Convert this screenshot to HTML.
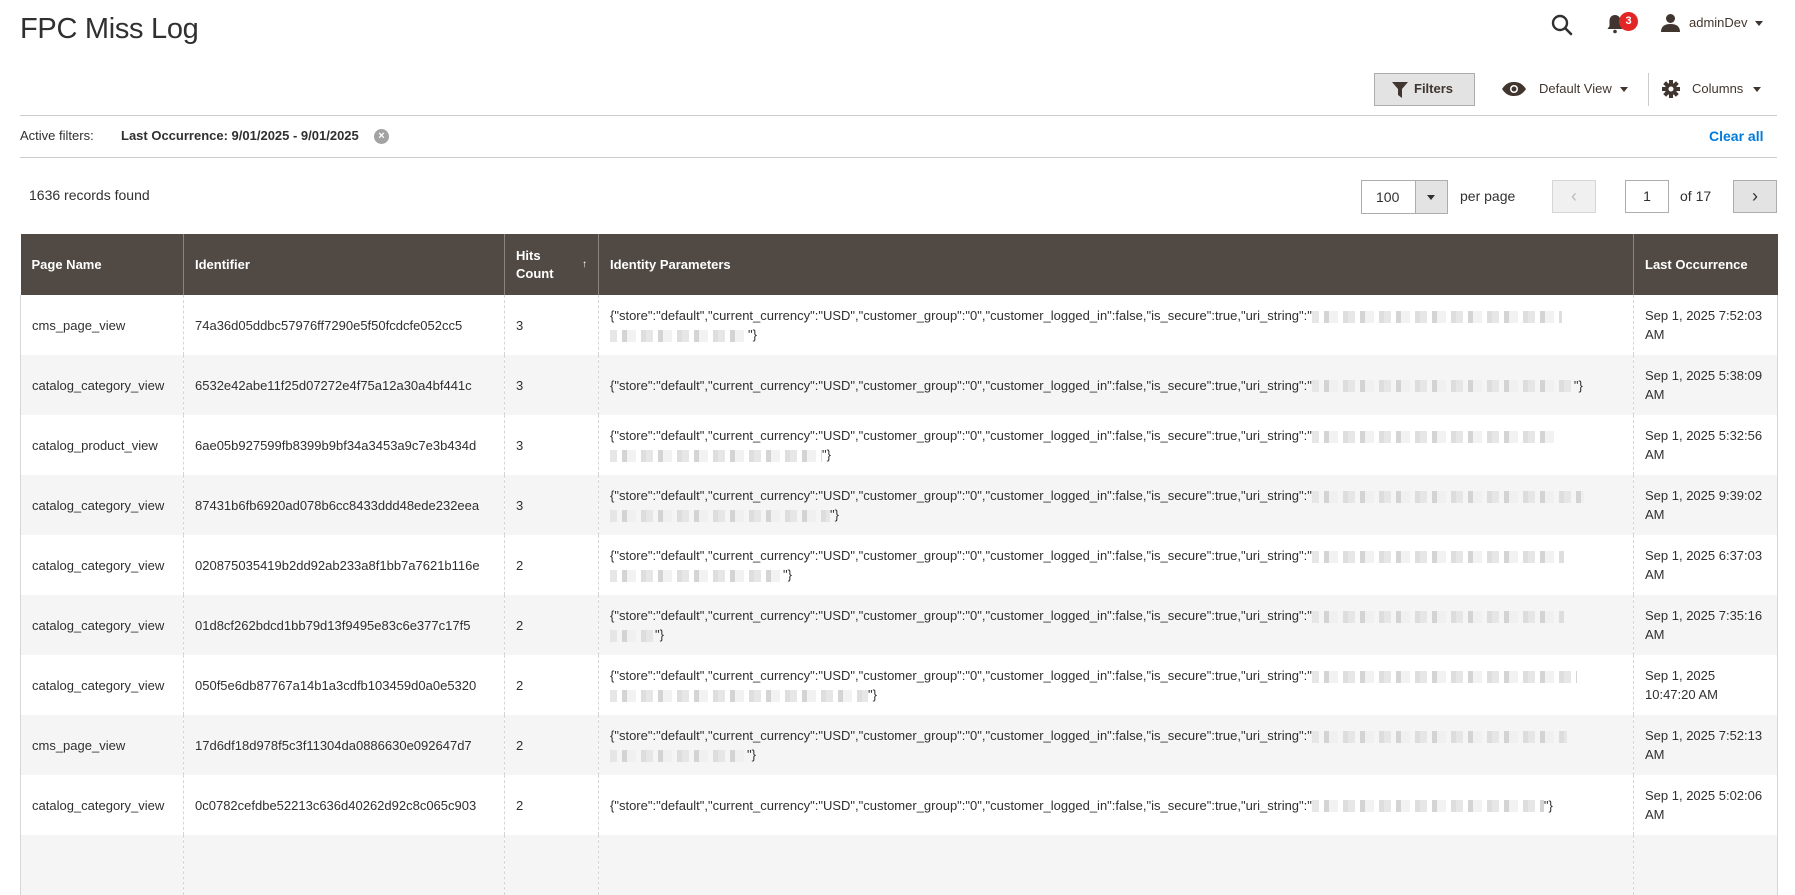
<!DOCTYPE html>
<html><head><meta charset="utf-8">
<style>
*{box-sizing:border-box;margin:0;padding:0}
body{width:1795px;height:844px;overflow:hidden;background:#fff;font-family:"Liberation Sans",sans-serif;color:#303030;position:relative}
.abs{position:absolute}
h1{position:absolute;left:20px;top:13px;font-size:29px;font-weight:normal;color:#303030;letter-spacing:-0.3px}
.hr{position:absolute;left:20px;width:1757px;height:1px;background:#ccc}
.btn{position:absolute;border:1px solid #adadad;background:#e3e3e3}
table{position:absolute;left:20px;top:234px;width:1757px;border-collapse:collapse;table-layout:fixed;font-size:13px}
th{background:#514943;color:#fff;font-weight:bold;text-align:left;padding:0 11px;height:61px;border-left:1px solid #8a837f;font-size:13px;line-height:18px}
th:first-child{border-left:none}
td{height:60px;padding:0 11px;vertical-align:middle;border-left:1px dashed #d6d6d6;line-height:19px;white-space:nowrap;overflow:hidden}
td:first-child{border-left:1px solid #d6d6d6}
td:last-child{border-right:1px solid #d6d6d6;white-space:normal}
tr:nth-child(odd) td{background:#f5f5f5}
.b{display:inline-block;height:12px;vertical-align:middle;background:repeating-linear-gradient(90deg,#e4e4e4 0 7px,transparent 7px 12px,#cfcfcf 12px 17px,#f0f0f0 17px 26px,transparent 26px 31px,#dadada 31px 36px);opacity:.9}
</style></head><body>
<h1>FPC Miss Log</h1>
<svg class="abs" style="left:1551px;top:14px" width="22" height="22" viewBox="0 0 22 22"><circle cx="9" cy="9" r="7" fill="none" stroke="#303030" stroke-width="2.4"/><line x1="14" y1="14" x2="20" y2="20" stroke="#303030" stroke-width="2.6" stroke-linecap="round"/></svg>
<svg class="abs" style="left:1606px;top:14px" width="18" height="20" viewBox="0 0 18 20"><path d="M9 1c-3.5 0-5.5 2.5-5.5 6v5L1.5 15h15l-2-3V7C14.5 3.5 12.5 1 9 1z" fill="#41362f"/><circle cx="9" cy="17.5" r="1.8" fill="#41362f"/></svg>
<div class="abs" style="left:1619px;top:12px;width:19px;height:19px;border-radius:50%;background:#e22626;color:#fff;font-size:11px;font-weight:bold;text-align:center;line-height:19px">3</div>
<svg class="abs" style="left:1661px;top:13px" width="19" height="19" viewBox="0 0 19 19"><circle cx="9.5" cy="5.5" r="4.5" fill="#41362f"/><path d="M0 19c0-6 4-8 9.5-8s9.5 2 9.5 8z" fill="#41362f"/></svg>
<div class="abs" style="left:1689px;top:15px;font-size:13px;color:#41362f">adminDev</div>
<div class="abs" style="left:1755px;top:21px;border:4px solid transparent;border-top:5px solid #41362f"></div>
<div class="btn" style="left:1374px;top:73px;width:101px;height:33px"></div>
<svg class="abs" style="left:1392px;top:82px" width="16" height="16" viewBox="0 0 16 16"><path d="M0 0h16l-6 7v9l-4-3V7z" fill="#41362f"/></svg>
<div class="abs" style="left:1414px;top:81px;font-size:13px;font-weight:bold;color:#41362f">Filters</div>
<svg class="abs" style="left:1502px;top:82px" width="24" height="14" viewBox="0 0 24 14"><path d="M0 7C4 1 8 0 12 0s8 1 12 7c-4 6-8 7-12 7S4 13 0 7z" fill="#41362f"/><circle cx="12" cy="7" r="4" fill="#fff"/><circle cx="12" cy="7" r="2.5" fill="#41362f"/></svg>
<div class="abs" style="left:1539px;top:81px;font-size:13px;color:#41362f">Default View</div>
<div class="abs" style="left:1620px;top:87px;border:4px solid transparent;border-top:5px solid #41362f"></div>
<div class="abs" style="left:1648px;top:73px;width:1px;height:33px;background:#ccc"></div>
<svg class="abs" style="left:1662px;top:80px" width="18" height="18" viewBox="0 0 18 18"><g fill="#41362f"><circle cx="9" cy="9" r="6"/><rect x="7" y="0" width="4" height="18"/><rect x="0" y="7" width="18" height="4"/><rect x="7" y="0" width="4" height="18" transform="rotate(45 9 9)"/><rect x="7" y="0" width="4" height="18" transform="rotate(-45 9 9)"/></g><circle cx="9" cy="9" r="2.5" fill="#fff"/></svg>
<div class="abs" style="left:1692px;top:81px;font-size:13px;color:#41362f">Columns</div>
<div class="abs" style="left:1753px;top:87px;border:4px solid transparent;border-top:5px solid #41362f"></div>
<div class="hr" style="top:115px"></div>
<div class="abs" style="left:20px;top:128px;font-size:13px;color:#303030">Active filters:</div>
<div class="abs" style="left:121px;top:128px;font-size:13px;font-weight:bold;color:#303030">Last Occurrence: 9/01/2025 - 9/01/2025</div>
<div class="abs" style="left:374px;top:129px;width:15px;height:15px;border-radius:50%;background:#a3a3a3;color:#fff;font-size:11px;font-weight:bold;text-align:center;line-height:15px">×</div>
<div class="abs" style="left:1709px;top:128px;font-size:14px;font-weight:bold;color:#007bdb">Clear all</div>
<div class="hr" style="top:157px"></div>
<div class="abs" style="left:29px;top:187px;font-size:14px">1636 records found</div>
<div class="abs" style="left:1361px;top:180px;width:87px;height:34px;border:1px solid #adadad;background:#fff"></div>
<div class="abs" style="left:1415px;top:180px;width:33px;height:34px;border:1px solid #adadad;background:#e3e3e3"></div>
<div class="abs" style="left:1376px;top:189px;font-size:14px">100</div>
<div class="abs" style="left:1427px;top:195px;border:4px solid transparent;border-top:5px solid #303030"></div>
<div class="abs" style="left:1460px;top:188px;font-size:14px">per page</div>
<div class="abs" style="left:1552px;top:180px;width:44px;height:33px;border:1px solid #d6d6d6;background:#f0f0f0;color:#bbb;font-size:18px;text-align:center;line-height:30px">‹</div>
<div class="abs" style="left:1625px;top:180px;width:44px;height:33px;border:1px solid #adadad;background:#fff;font-size:14px;text-align:center;line-height:31px">1</div>
<div class="abs" style="left:1680px;top:188px;font-size:14px">of 17</div>
<div class="abs" style="left:1733px;top:180px;width:44px;height:33px;border:1px solid #adadad;background:#e3e3e3;color:#303030;font-size:18px;text-align:center;line-height:30px">›</div>
<table>
<colgroup><col style="width:163px"><col style="width:321px"><col style="width:94px"><col style="width:1035px"><col style="width:144px"></colgroup>
<tr><th>Page Name</th><th>Identifier</th><th>Hits<br>Count<span style="float:right;font-weight:normal;font-size:10px;margin-top:-9px">↑</span></th><th>Identity Parameters</th><th>Last Occurrence</th></tr>
<tr><td>cms_page_view</td><td>74a36d05ddbc57976ff7290e5f50fcdcfe052cc5</td><td>3</td><td>{"store":"default","current_currency":"USD","customer_group":"0","customer_logged_in":false,"is_secure":true,"uri_string":"<span class="b" style="width:250px"></span><br><span class="b" style="width:138px"></span>"}</td><td>Sep 1, 2025 7:52:03 AM</td></tr>
<tr><td>catalog_category_view</td><td>6532e42abe11f25d07272e4f75a12a30a4bf441c</td><td>3</td><td>{"store":"default","current_currency":"USD","customer_group":"0","customer_logged_in":false,"is_secure":true,"uri_string":"<span class="b" style="width:262px"></span>"}</td><td>Sep 1, 2025 5:38:09 AM</td></tr>
<tr><td>catalog_product_view</td><td>6ae05b927599fb8399b9bf34a3453a9c7e3b434d</td><td>3</td><td>{"store":"default","current_currency":"USD","customer_group":"0","customer_logged_in":false,"is_secure":true,"uri_string":"<span class="b" style="width:245px"></span><br><span class="b" style="width:212px"></span>"}</td><td>Sep 1, 2025 5:32:56 AM</td></tr>
<tr><td>catalog_category_view</td><td>87431b6fb6920ad078b6cc8433ddd48ede232eea</td><td>3</td><td>{"store":"default","current_currency":"USD","customer_group":"0","customer_logged_in":false,"is_secure":true,"uri_string":"<span class="b" style="width:272px"></span><br><span class="b" style="width:220px"></span>"}</td><td>Sep 1, 2025 9:39:02 AM</td></tr>
<tr><td>catalog_category_view</td><td>020875035419b2dd92ab233a8f1bb7a7621b116e</td><td>2</td><td>{"store":"default","current_currency":"USD","customer_group":"0","customer_logged_in":false,"is_secure":true,"uri_string":"<span class="b" style="width:252px"></span><br><span class="b" style="width:173px"></span>"}</td><td>Sep 1, 2025 6:37:03 AM</td></tr>
<tr><td>catalog_category_view</td><td>01d8cf262bdcd1bb79d13f9495e83c6e377c17f5</td><td>2</td><td>{"store":"default","current_currency":"USD","customer_group":"0","customer_logged_in":false,"is_secure":true,"uri_string":"<span class="b" style="width:252px"></span><br><span class="b" style="width:45px"></span>"}</td><td>Sep 1, 2025 7:35:16 AM</td></tr>
<tr><td>catalog_category_view</td><td>050f5e6db87767a14b1a3cdfb103459d0a0e5320</td><td>2</td><td>{"store":"default","current_currency":"USD","customer_group":"0","customer_logged_in":false,"is_secure":true,"uri_string":"<span class="b" style="width:265px"></span><br><span class="b" style="width:258px"></span>"}</td><td>Sep 1, 2025<br>10:47:20 AM</td></tr>
<tr><td>cms_page_view</td><td>17d6df18d978f5c3f11304da0886630e092647d7</td><td>2</td><td>{"store":"default","current_currency":"USD","customer_group":"0","customer_logged_in":false,"is_secure":true,"uri_string":"<span class="b" style="width:255px"></span><br><span class="b" style="width:137px"></span>"}</td><td>Sep 1, 2025 7:52:13 AM</td></tr>
<tr><td>catalog_category_view</td><td>0c0782cefdbe52213c636d40262d92c8c065c903</td><td>2</td><td>{"store":"default","current_currency":"USD","customer_group":"0","customer_logged_in":false,"is_secure":true,"uri_string":"<span class="b" style="width:232px"></span>"}</td><td>Sep 1, 2025 5:02:06 AM</td></tr>
<tr><td>&nbsp;</td><td></td><td></td><td></td><td></td></tr>
</table>
</body></html>
